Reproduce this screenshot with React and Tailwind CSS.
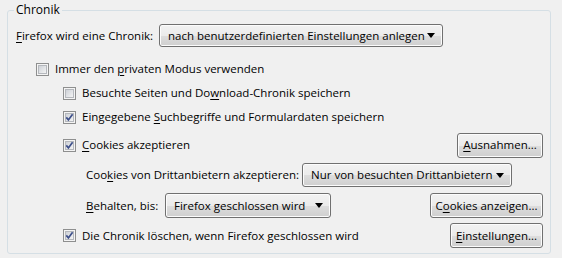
import React from "react";

function Key({ children }) {
    return <span className="underline underline-offset-[2px] decoration-[1px]">{children}</span>;
}

function CheckBox({ checked }) {
    return (
        <svg width="13" height="13" viewBox="0 0 13 13" className="shrink-0">
            <defs>
                <linearGradient id="cbg" x1="0" y1="0" x2="1" y2="1">
                    <stop offset="0" stopColor="#cbcfd5" />
                    <stop offset="1" stopColor="#f6f6f6" />
                </linearGradient>
            </defs>
            <rect x="0.5" y="0.5" width="12" height="12" fill="#f4f4f4" stroke="#8e8f8f" />
            <rect x="2.5" y="2.5" width="8" height="8" fill="url(#cbg)" stroke="#b5b8bd" />
            {checked && (
                <path d="M3.3 6.4 L5.4 8.9 L9.6 3.2" fill="none" stroke="#3d4f8a" strokeWidth="1.7" />
            )}
        </svg>
    );
}

function Button({ children, className = "" }) {
    return (
        <div
            className={
                "shrink-0 flex items-center justify-center rounded-[3px] border border-[#707070] shadow-[inset_0_0_0_1px_#fcfcfc] bg-[linear-gradient(to_bottom,#f2f2f2_0%,#ebebeb_50%,#dddddd_51%,#cfcfcf_100%)] " +
                className
            }
        >
            {children}
        </div>
    );
}

function Select({ children, className = "" }) {
    return (
        <div
            className={
                "shrink-0 flex items-center justify-between pl-[8px] pr-[7px] rounded-[3px] border border-[#707070] shadow-[inset_0_0_0_1px_#fcfcfc] bg-[linear-gradient(to_bottom,#f2f2f2_0%,#ebebeb_50%,#dddddd_51%,#cfcfcf_100%)] " +
                className
            }
        >
            <span className="whitespace-nowrap">{children}</span>
            <svg width="8" height="5" viewBox="0 0 8 5" className="shrink-0">
                <path d="M0 0 H8 L4 5 Z" fill="#000" />
            </svg>
        </div>
    );
}

export default function App() {
    return (
        <div className="w-[562px] h-[258px] bg-[#f0f0f0] pt-[2px] pl-[7px] text-[11.5px] leading-[16px] text-black font-['Open_Sans',sans-serif]">
            <fieldset className="w-[544px] border border-[#d5dfe5] rounded-[3px] pb-[5px]">
                <legend className="ml-[6px] px-[2px] leading-[16px] text-[12px]">Chronik</legend>

                <div className="mt-[6px] h-[23px] flex items-center pl-[8px]">
                    <span className="w-[143px] shrink-0 whitespace-nowrap">
                        <Key>F</Key>irefox wird eine Chronik:
                    </span>
                    <Select className="w-[284px] h-[23px]">nach benutzerdefinierten Einstellungen anlegen</Select>
                </div>

                <div className="mt-[10px] h-[24px] flex items-center gap-[6px] pl-[28px]">
                    <CheckBox />
                    <span>Immer den <Key>p</Key>rivaten Modus verwenden</span>
                </div>

                <div className="h-[24px] flex items-center gap-[6px] pl-[55px]">
                    <CheckBox />
                    <span>Besuchte Seiten und Do<Key>w</Key>nload-Chronik speichern</span>
                </div>

                <div className="h-[24px] flex items-center gap-[6px] pl-[55px]">
                    <CheckBox checked />
                    <span>Eingegebene <Key>S</Key>uchbegriffe und Formulardaten speichern</span>
                </div>

                <div className="mt-[4px] h-[24px] flex items-center gap-[6px] pl-[55px] pr-[7px]">
                    <CheckBox checked />
                    <span className="flex-1"><Key>C</Key>ookies akzeptieren</span>
                    <Button className="w-[86px] h-[25px]"><span><Key>A</Key>usnahmen...</span></Button>
                </div>

                <div className="mt-[6px] h-[24px] flex items-center pl-[78px]">
                    <span className="w-[216px] shrink-0 whitespace-nowrap">Coo<Key>k</Key>ies von Drittanbietern akzeptieren:</span>
                    <Select className="w-[210px] h-[24px]">Nur von besuchten Drittanbietern</Select>
                </div>

                <div className="mt-[6px] h-[25px] flex items-center pl-[78px] pr-[7px]">
                    <span className="w-[79px] shrink-0 whitespace-nowrap"><Key>B</Key>ehalten, bis:</span>
                    <Select className="w-[166px] h-[25px]">Firefox geschlossen wird</Select>
                    <div className="flex-1" />
                    <Button className="w-[113px] h-[25px]"><span>C<Key>o</Key>okies anzeigen...</span></Button>
                </div>

                <div className="mt-[5px] h-[25px] flex items-center gap-[6px] pl-[55px] pr-[7px]">
                    <CheckBox checked />
                    <span className="flex-1">Die Chronik löschen, wenn Firefox <Key>g</Key>eschlossen wird</span>
                    <Button className="w-[93px] h-[25px]"><span><Key>E</Key>instellungen...</span></Button>
                </div>
            </fieldset>
        </div>
    );
}
